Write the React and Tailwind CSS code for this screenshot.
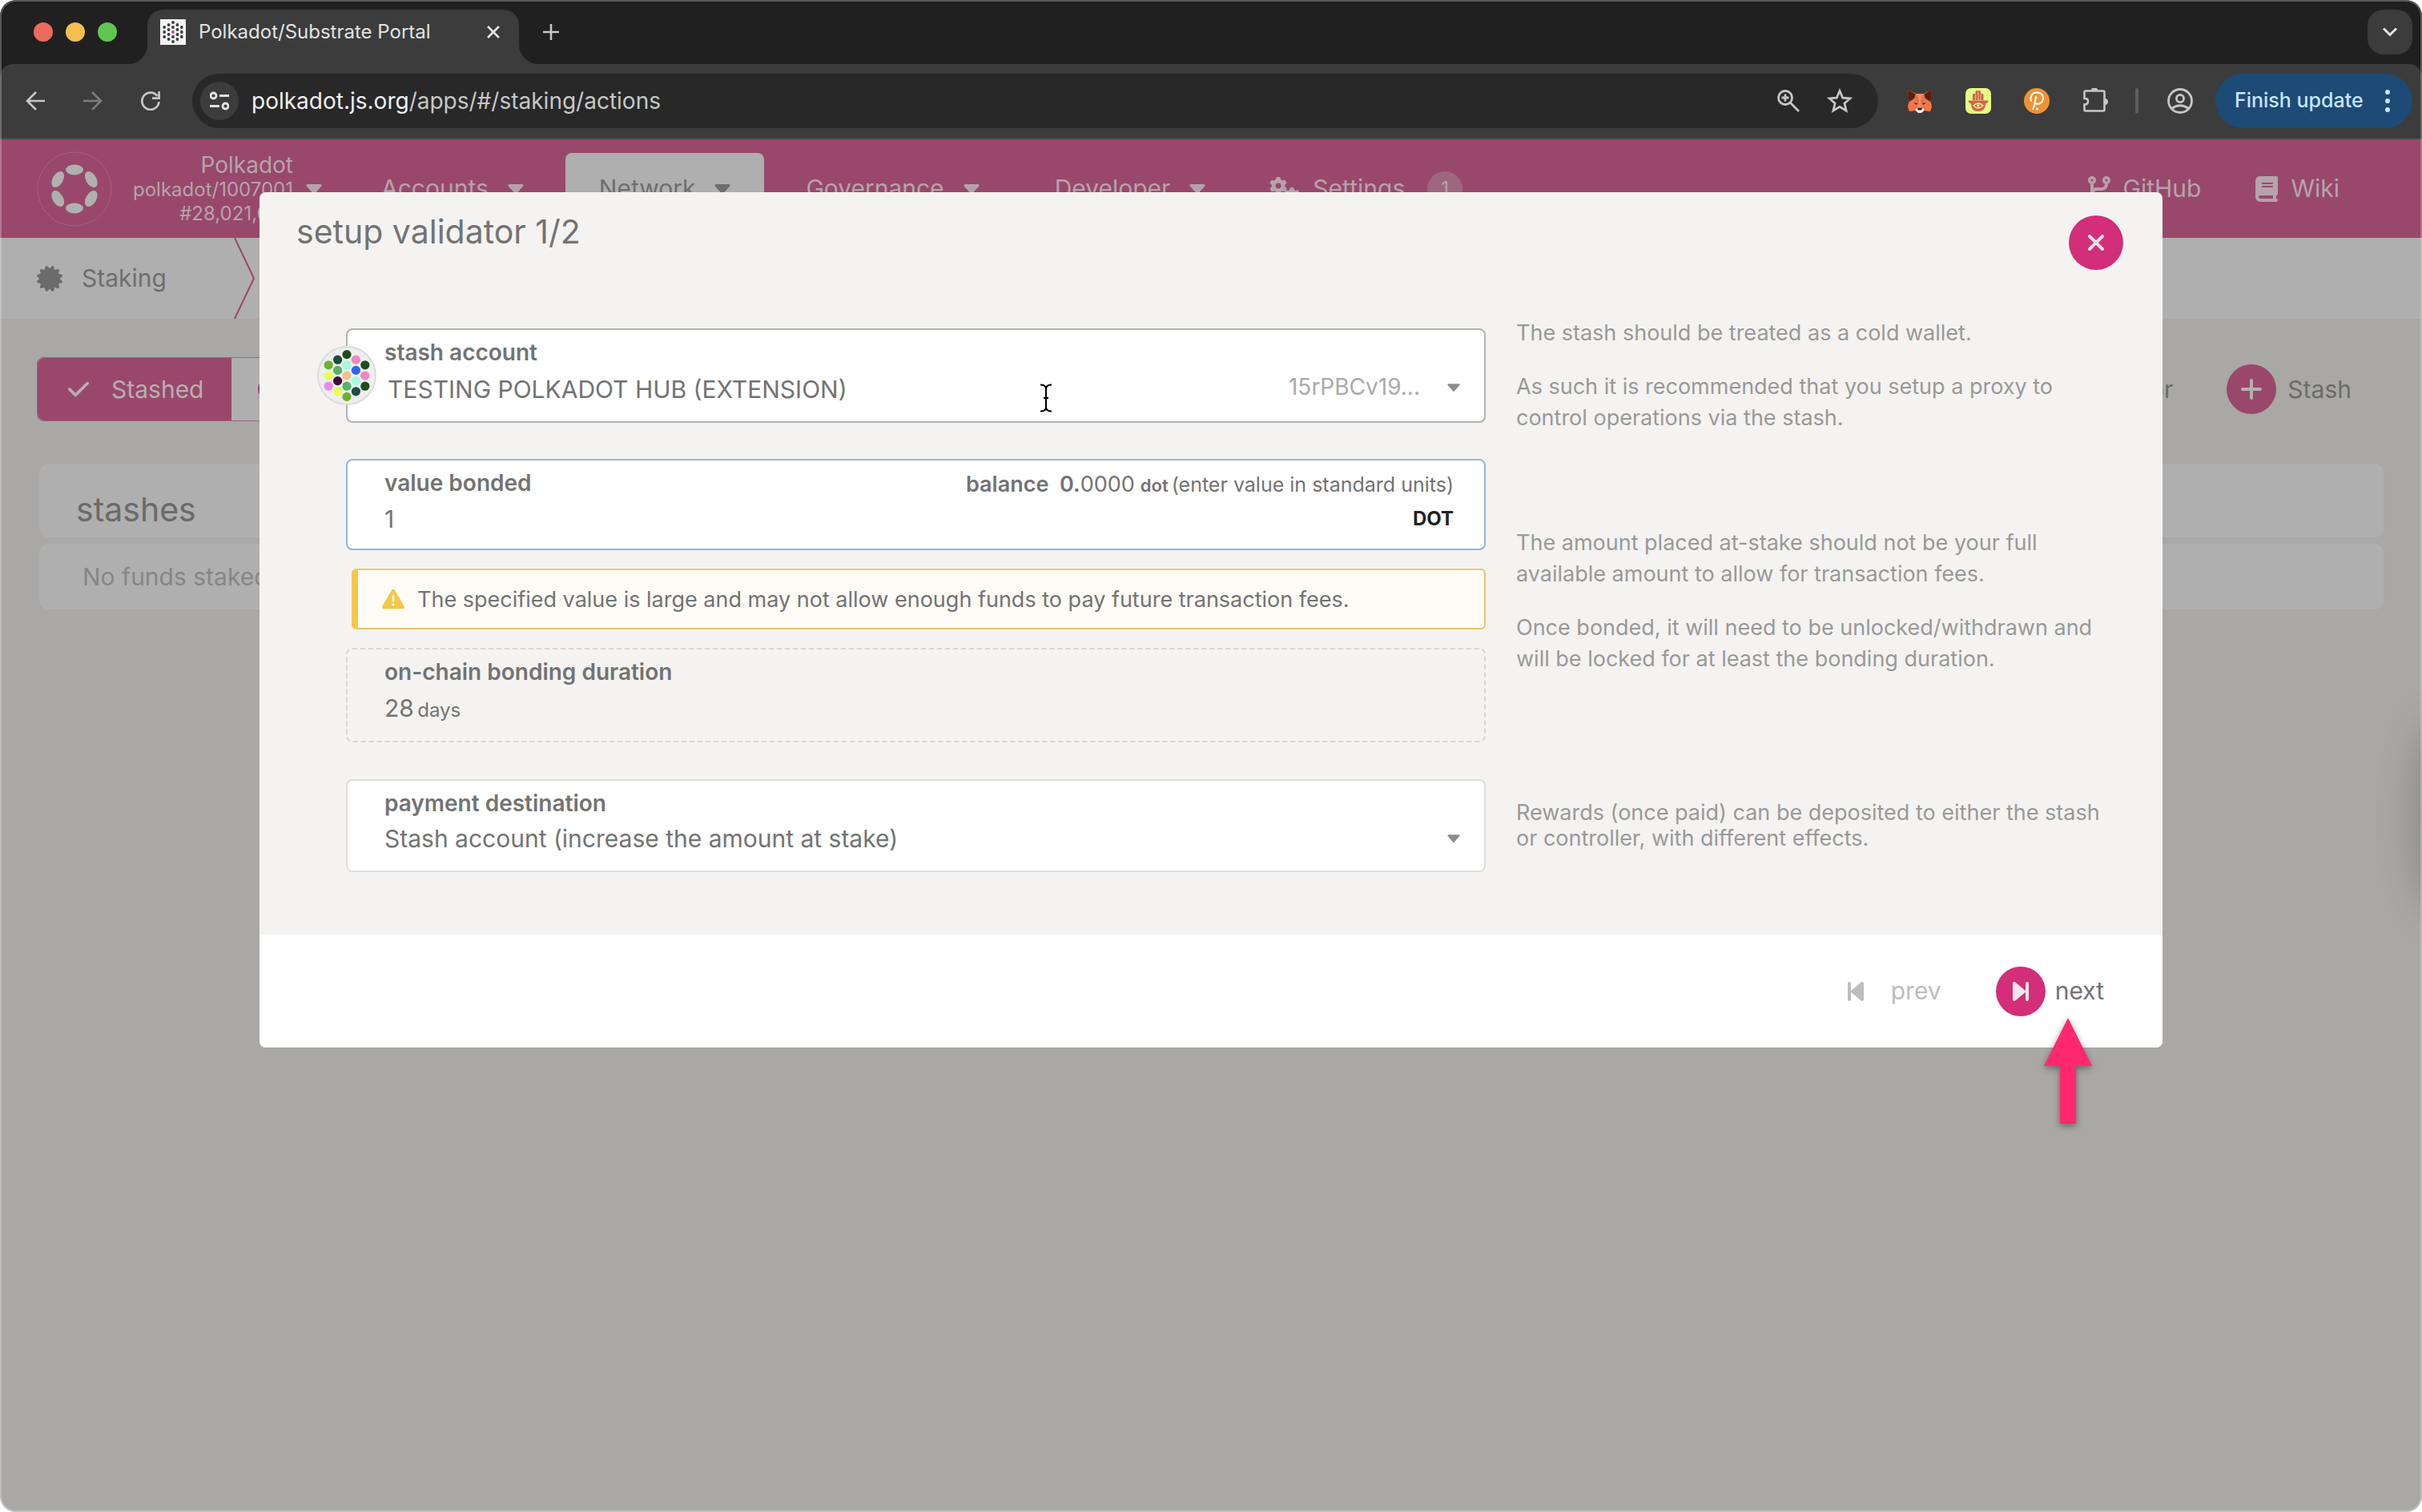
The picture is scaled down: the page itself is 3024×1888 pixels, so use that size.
import { useState } from "react";
import {
  FaBackwardStep,
  FaBook,
  FaCertificate,
  FaCheck,
  FaCodeBranch,
  FaForwardStep,
  FaGear,
  FaPlus,
  FaRegCircle,
  FaTriangleExclamation,
  FaXmark,
} from "react-icons/fa6";

// columns of the 19-dot polkadot figure: [x, y, color]
const IDENTICON = [
  [0, -4, "#1e4d1e"],
  [0, -2, "#a2fbdc"],
  [0, 0, "#f5c08d"],
  [0, 2, "#55b36a"],
  [0, 4, "#70b030"],
  [-1, -3, "#1f4d3f"],
  [-1, -1, "#55b36a"],
  [-1, 1, "#400b3a"],
  [-1, 3, "#e8ff55"],
  [-2, -2, "#70b030"],
  [-2, 0, "#e8ff55"],
  [-2, 2, "#ec88ee"],
  [1, -3, "#ec88c4"],
  [1, -1, "#3163f5"],
  [1, 1, "#a2fbdc"],
  [1, 3, "#1f4d3f"],
  [2, -2, "#1e4d1e"],
  [2, 0, "#ec88c4"],
  [2, 2, "#1e4d1e"],
];

const NAV = [
  { label: "Accounts" },
  { label: "Network", active: true },
  { label: "Governance" },
  { label: "Developer" },
];

const Caret = ({ className }) => (
  <svg viewBox="0 0 20 12" className={className} fill="currentColor">
    <path d="M2 0h16a1.5 1.5 0 0 1 1.2 2.4l-7.6 8.6a2 2 0 0 1-3.2 0L.8 2.4A1.5 1.5 0 0 1 2 0z" />
  </svg>
);

const Favicon = () => (
  <svg viewBox="-16 -16 32 32" className="size-8 bg-[#f4f4f4]">
    {IDENTICON.map(([x, y], i) => (
      <circle
        key={i}
        cx={x * 5.4}
        cy={y * 3}
        r="1.9"
        fill={x === 0 && y === 0 ? "#c0409a" : "#3c3c3c"}
      />
    ))}
  </svg>
);

const Identicon = () => (
  <svg viewBox="-37 -37 74 74" className="size-[74px]">
    <circle r="36" fill="#eeeeee" stroke="#dcdcdc" strokeWidth="2" />
    {IDENTICON.map(([x, y, color], i) => (
      <circle key={i} cx={x * 11.4} cy={y * 6.6} r="5.6" fill={color} />
    ))}
  </svg>
);

const PolkadotLogo = () => (
  <svg viewBox="-47 -47 94 94" className="size-[94px]">
    <circle r="46" fill="none" stroke="#a75f7e" />
    {[0, 60, 120, 180, 240, 300].map((deg) => (
      <ellipse
        key={deg}
        cy="-24"
        rx="11"
        ry="6.5"
        fill="#b0b0b0"
        transform={`rotate(${deg})`}
      />
    ))}
  </svg>
);

const Fox = () => (
  <svg viewBox="0 0 32 32" className="size-8">
    <path d="M2 2l9 5h10l9-5 1 6-2 7 2 8-2 6-7-1-4 3h-4l-4-3-7 1-2-6 2-8-2-7z" fill="#ec7a50" />
    <path d="M2 2l9 6-2 5-6 4-2-9z" fill="#5c1f0d" />
    <path d="M30 2l-9 6 2 5 6 4 2-9z" fill="#5c1f0d" />
    <path d="M11 7h10l1 7-3 9h-6l-3-9z" fill="#f08a5f" />
    <path d="M11 7l4 8-1 8-4-9zM21 7l-4 8 1 8 4-9z" fill="#e07048" />
    <path d="M1 23l9-1 3 4-3 2-7 1zM31 23l-9-1-3 4 3 2 7 1z" fill="#fb743d" />
    <path d="M8 18l5 1-1 2zM24 18l-5 1 1 2z" fill="#4a2018" />
    <path d="M10 27l3-2h6l3 2-4 4h-4z" fill="#f6f6f6" />
    <path d="M13 25h6l-1 2.500h-4z" fill="#241a1a" />
  </svg>
);

const Hand = () => (
  <svg viewBox="0 0 32 32" className="size-8">
    <rect width="32" height="32" rx="7" fill="#e4fd85" />
    <path
      d="M9 15V8.500a1.500 1.500 0 0 1 3.500 0V5a1.600 1.600 0 0 1 3.200-.500 1.600 1.600 0 0 1 3.300.5v3.500a1.500 1.500 0 0 1 3.500 0V15z"
      fill="#d4604f"
    />
    <path d="M12.700 8v7M18.900 8v7M15.800 5v10" stroke="#e4fd85" strokeWidth=".7" />
    <path d="M3.500 15.500h25q0 3-3.500 4 0 9.500-9 9.500t-9-9.500q-3.500-1-3.500-4z" fill="#d4604f" />
    <path d="M10 22q6-6 12 0-6 6-12 0z" fill="#d4604f" stroke="#e4fd85" strokeWidth="1.500" />
    <circle cx="16" cy="22" r="1.800" fill="#e4fd85" />
  </svg>
);

const Polkagate = () => (
  <svg viewBox="0 0 32 32" className="size-8">
    <circle cx="16" cy="16" r="16" fill="#ef9234" />
    <g fill="none" stroke="#fff" strokeWidth="2" strokeLinecap="round">
      <path d="M9 16c-2-6 2-10.500 7-10.500 5.500 0 8.500 3.500 8 8-.500 4-4 7-9 6" />
      <path d="M15 11l-2 10-1.500 5" />
    </g>
    <circle cx="16.500" cy="26" r="1.600" fill="#fff" />
  </svg>
);

const BrowserChrome = () => (
  <header className="bg-[#202020]">
    <div className="flex h-20 items-end">
      <div className="flex h-full w-[160px] items-center gap-4 pl-[42px]">
        <span className="size-6 rounded-full bg-[#ed6a5e]" />
        <span className="size-6 rounded-full bg-[#f5bf4f]" />
        <span className="size-6 rounded-full bg-[#61c554]" />
      </div>
      <div className="size-6 bg-[#3c3c3c]">
        <div className="size-6 rounded-br-3xl bg-[#202020]" />
      </div>
      <div className="flex h-[68px] w-[464px] items-center rounded-t-[20px] bg-[#3c3c3c] pb-3 pr-5 pl-4">
        <Favicon />
        <span className="ml-4 flex-1 text-2xl text-[#e3e3e3]">
          Polkadot/Substrate Portal
        </span>
        <button aria-label="Close tab" className="text-[#e3e3e3]">
          <svg viewBox="0 0 24 24" className="size-6" stroke="currentColor" strokeWidth="2.600">
            <path d="M5 5l14 14M19 5L5 19" />
          </svg>
        </button>
      </div>
      <div className="size-6 bg-[#3c3c3c]">
        <div className="size-6 rounded-bl-3xl bg-[#202020]" />
      </div>
      <button aria-label="New tab" className="flex h-full items-center pl-1 text-[#c7c7c7]">
        <svg viewBox="0 0 24 24" className="size-6" stroke="currentColor" strokeWidth="2.600">
          <path d="M12 2v20M2 12h20" />
        </svg>
      </button>
      <button
        aria-label="Search tabs"
        className="mr-3 mb-3 ml-auto grid size-14 place-items-center rounded-[20px] bg-[#3c3c3c] text-[#e3e3e3]"
      >
        <svg viewBox="0 0 20 12" className="h-3 w-5" fill="none" stroke="currentColor" strokeWidth="3">
          <path d="M2 1.500l8 8 8-8" />
        </svg>
      </button>
    </div>

    <div className="flex h-[94px] items-center rounded-t-2xl border-b-2 border-[#464a48] bg-[#3c3c3c] pr-3 pl-8 text-[#c7c7c7]">
      <button aria-label="Back">
        <svg viewBox="0 0 24 24" className="size-6" fill="none" stroke="currentColor" strokeWidth="2.600">
          <path d="M24 12H2M13 1L2 12l11 11" />
        </svg>
      </button>
      <button aria-label="Forward" className="ml-12 text-[#7c7c7c]">
        <svg viewBox="0 0 24 24" className="size-6" fill="none" stroke="currentColor" strokeWidth="2.600">
          <path d="M0 12h22M11 1l11 11-11 11" />
        </svg>
      </button>
      <button aria-label="Reload" className="ml-12">
        <svg viewBox="0 0 24 24" className="size-6" fill="none" stroke="currentColor" strokeWidth="2.700">
          <path d="M22.500 13A10.600 10.600 0 1 1 20.500 6" />
          <path d="M22.600 0v8.700H14" />
        </svg>
      </button>
      <div className="ml-10 flex h-[68px] flex-1 items-center rounded-full bg-[#282828] pr-8 pl-2.5">
        <span className="grid size-12 place-items-center rounded-full bg-[#3c3c3c] text-[#e3e3e3]">
          <svg viewBox="0 0 24 24" className="size-6" fill="none" stroke="currentColor" strokeWidth="2.800">
            <circle cx="4.500" cy="5.500" r="3.500" />
            <circle cx="19.500" cy="18.500" r="3.500" />
            <path d="M12 5.500h12M0 18.500h12" />
          </svg>
        </span>
        <span className="ml-4 flex-1 text-[28px] text-[#c7c7c7]">
          <span className="text-[#f0f0f0]">polkadot.js.org</span>/apps/#/staking/actions
        </span>
        <svg viewBox="0 0 28 28" className="size-7" fill="none" stroke="currentColor" strokeWidth="2.800">
          <circle cx="10" cy="10" r="8.500" />
          <path d="M16.500 16.500L27 27M10 5.500v9M5.500 10h9" />
        </svg>
        <svg viewBox="0 0 32 32" className="ml-[34px] size-8" fill="none" stroke="currentColor" strokeWidth="2.700">
          <path d="M16 3.500l3.700 8.600 9.300.8-7.100 6.100 2.200 9.200-8.100-4.900-8.100 4.900 2.200-9.200L3 12.900l9.300-.8z" />
        </svg>
      </div>
      <div className="ml-9 flex items-center gap-[41px]">
        <Fox />
        <Hand />
        <Polkagate />
        <svg viewBox="0 0 32 32" className="size-8" fill="none" stroke="currentColor" strokeWidth="2.600">
          <path d="M2.500 13V5q0-1.500 1.500-1.500h22q1.500 0 1.500 1.500v22q0 1.500-1.500 1.500H4q-1.500 0-1.500-1.500v-6.500q4.500 0 4.500-4T2.500 13z" />
          <path d="M11 3a4 4 0 0 1 8 0zM28 13a4 4 0 0 1 0 8z" fill="currentColor" stroke="none" />
        </svg>
      </div>
      <span className="ml-[34px] h-8 w-1 rounded-full bg-[#5e5e5e]" />
      <svg viewBox="0 0 32 32" className="ml-9 size-8" fill="none" stroke="currentColor" strokeWidth="2.800">
        <circle cx="16" cy="16" r="14.500" />
        <circle cx="16" cy="13" r="4.600" />
        <path d="M5.500 25.500q10.500-7.500 21 0" />
      </svg>
      <button className="ml-7 flex h-[68px] w-[246px] items-center justify-between rounded-full bg-[#1e4a76] pr-7 pl-6 text-[25px] font-medium text-[#c7e4ff]">
        Finish update
        <span className="flex flex-col gap-[5px]">
          <span className="size-1.5 rounded-full bg-[#c7e4ff]" />
          <span className="size-1.5 rounded-full bg-[#c7e4ff]" />
          <span className="size-1.5 rounded-full bg-[#c7e4ff]" />
        </span>
      </button>
    </div>
  </header>
);

const Menu = () => (
  <div className="flex h-[123px] items-center bg-[#99486b] pr-[103px] pl-[46px] text-[30px] text-[#b5a3ac]">
    <PolkadotLogo />
    <button className="ml-3 flex w-[250px] items-center justify-end gap-4 text-right">
      <span className="text-[28px] leading-8">
        Polkadot
        <span className="block text-2xl leading-[30px]">polkadot/1007001</span>
        <span className="block text-2xl leading-[30px]">#28,021,064</span>
      </span>
      <Caret className="h-3 w-5" />
    </button>
    <nav className="ml-8 flex h-full items-center gap-2.5">
      {NAV.map((item) => (
        <button
          key={item.label}
          className={
            item.active
              ? "mt-[17px] flex h-[106px] items-center gap-6 rounded-t-lg bg-[#afafaf] px-[42px] pb-[17px] text-[#6e6e6e]"
              : "flex items-center gap-6 px-[42px]"
          }
        >
          {item.label}
          <Caret className="h-3 w-5" />
        </button>
      ))}
      <button className="flex items-center pl-7">
        <span className="flex items-center">
          <FaGear className="mb-2 size-[22px]" />
          <FaGear className="-ml-1 mt-4 size-5" />
        </span>
        <span className="ml-4">Settings</span>
        <span className="ml-7 grid size-11 place-items-center rounded-full bg-[#9e6780] text-2xl">
          1
        </span>
      </button>
    </nav>
    <a href="#github" className="ml-auto flex items-center gap-4">
      <FaCodeBranch className="h-8 w-7" />
      GitHub
    </a>
    <a href="#wiki" className="ml-[68px] flex items-center gap-4">
      <FaBook className="h-8 w-7" />
      Wiki
    </a>
  </div>
);

const StakingPage = () => (
  <>
    <Menu />
    <div className="flex h-[101px] items-center bg-[#afafaf] pl-[46px] text-[30px] text-[#6e6e6e]">
      <FaCertificate className="size-8 text-[#6b6b6b]" />
      <span className="ml-6 w-[190px]">Staking</span>
      <svg viewBox="0 0 26 101" className="h-full w-[26px]" fill="none" stroke="#99486b" strokeWidth="2">
        <path d="M1 0l24 50.500L1 101" />
      </svg>
    </div>
    <main className="flex-1 pt-12 pr-12 pl-[46px]">
      <div className="flex items-center text-[30px]">
        <div className="flex h-20 rounded-lg border border-[#a3607f] bg-[#afafaf]">
          <button className="flex w-[242px] items-center rounded-l-lg bg-[#99486b] pl-9 text-[#b9adb2]">
            <FaCheck className="size-[30px]" />
            <span className="ml-[26px]">Stashed</span>
          </button>
          <button className="flex w-[242px] items-center pl-[33px] text-[#99486b]">
            <FaRegCircle className="size-7" />
          </button>
        </div>
        <div className="ml-auto flex items-center pr-10 text-[#6b6b6b]">
          <button className="flex items-center gap-3.5">
            <span className="grid size-[62px] place-items-center rounded-full bg-[#99486b] text-[#b9adb2]">
              <FaPlus className="size-8" />
            </span>
            Validator
          </button>
          <button className="ml-[67px] flex items-center gap-3.5">
            <span className="grid size-[62px] place-items-center rounded-full bg-[#99486b] text-[#b9adb2]">
              <FaPlus className="size-8" />
            </span>
            Stash
          </button>
        </div>
      </div>
      <section className="mt-[53px] space-y-2 pl-[3px]">
        <h1 className="flex h-[92px] items-center rounded-xl bg-[#afafaf] pt-6 pl-[46px] text-[41px] text-[#6a6a6a]">
          stashes
        </h1>
        <p className="flex h-[82px] items-center rounded-xl bg-[#afafaf] pl-[54px] text-[30px] text-[#868686]">
          No funds staked yet
        </p>
      </section>
    </main>
  </>
);

const LABEL = "block text-[28px] leading-8 font-semibold text-[#737373]";
const FIELD = "relative rounded-lg border-2 bg-white px-[46px] pt-3";

const SetupValidator = () => {
  const [value, setValue] = useState("1");

  return (
    <div
      role="dialog"
      aria-labelledby="setup-title"
      className="absolute inset-x-81 top-[240px] rounded-lg bg-[#f4f3f1] text-[#737373]"
    >
      <div className="flex h-[156px] items-start justify-between pr-[49px] pl-[46px]">
        <h2 id="setup-title" className="pt-6 text-[41px] leading-[50px]">
          setup validator 1/2
        </h2>
        <button
          aria-label="Close"
          className="mt-[29px] grid size-[68px] place-items-center rounded-full bg-[#d32e79] text-[#fbe3ee]"
        >
          <FaXmark className="size-8" />
        </button>
      </div>

      <div className="grid grid-cols-[1fr_744px] items-center gap-x-[38px] gap-y-8 pr-[63px] pb-[78px] pl-27 text-[27px] leading-[39px] text-[#999]">
        <div className={`${FIELD} h-[118px] border-[#b3b3b3]`}>
          <div className="absolute top-[20px] -left-[38px]">
            <Identicon />
          </div>
          <label htmlFor="stash" className={LABEL}>
            stash account
          </label>
          <div className="-mr-4 flex items-center">
            <select
              id="stash"
              className="h-14 flex-1 appearance-none pt-1.5 pl-1 text-[30px] text-[#737373]"
            >
              <option>TESTING POLKADOT HUB (EXTENSION)</option>
            </select>
            <span className="text-[28px] text-[#aaa]">15rPBCv19...</span>
            <Caret className="ml-[34px] h-2.5 w-4 text-[#8c8c8c]" />
          </div>
          <svg
            viewBox="0 0 16 36"
            className="absolute top-[67px] left-[864px] h-9 w-4"
            fill="none"
            stroke="#000"
            strokeWidth="2.200"
          >
            <path d="M1 1.500q6 0 7 4 1-4 7-4M8 5v26M1 34.500q6 0 7-4 1 4 7 4M5 18h6" />
          </svg>
        </div>
        <div className="space-y-7">
          <p>The stash should be treated as a cold wallet.</p>
          <p>
            As such it is recommended that you setup a proxy to control
            operations via the stash.
          </p>
        </div>

        <div className="text-[#737373]">
          <div className={`${FIELD} h-[114px] border-[#94b6d8]`}>
            <div className="-mr-2 flex justify-between">
              <label htmlFor="bonded" className={LABEL}>
                value bonded
              </label>
              <span className="text-[25px] leading-9">
                <b className="text-[27px] font-semibold">balance&nbsp; 0.</b>
                <span className="text-[27px]">0000</span>{" "}
                <b className="text-[22px] font-semibold">dot</b>
                <span className="ml-1">(enter value in standard units)</span>
              </span>
            </div>
            <div className="-mr-2 flex items-center">
              <input
                id="bonded"
                value={value}
                onChange={(e) => setValue(e.target.value)}
                className="h-12 flex-1 text-[30px] outline-none"
              />
              <span className="text-2xl font-bold text-[#222]">DOT</span>
            </div>
          </div>
          <div className="mt-[23px] ml-[7px] flex h-[76px] items-center gap-4 rounded-md border-2 border-l-8 border-[#e8c668] border-l-[#f5c748] bg-[#fffcf7] pl-[30px]">
            <FaTriangleExclamation className="size-7 text-[#f5c748]" />
            The specified value is large and may not allow enough funds to pay
            future transaction fees.
          </div>
          <div className="mt-[23px] h-[118px] rounded-lg border-2 border-dashed border-[#d6d5d3] px-[46px] pt-3">
            <span className={LABEL}>on-chain bonding duration</span>
            <p className="pt-1 text-[30px] leading-[50px]">
              28 <span className="-ml-1 text-2xl">days</span>
            </p>
          </div>
        </div>
        <div className="space-y-7">
          <p>
            The amount placed at-stake should not be your full available amount
            to allow for transaction fees.
          </p>
          <p>
            Once bonded, it will need to be unlocked/withdrawn and will be
            locked for at least the bonding duration.
          </p>
        </div>

        <div className={`${FIELD} mt-3.5 h-[116px] border-[#dedede]`}>
          <label htmlFor="payment" className={LABEL}>
            payment destination
          </label>
          <div className="-mr-4 flex items-center">
            <select
              id="payment"
              className="h-14 flex-1 appearance-none text-[30px] text-[#737373]"
            >
              <option>Stash account (increase the amount at stake)</option>
            </select>
            <Caret className="h-2.5 w-4 text-[#8c8c8c]" />
          </div>
        </div>
        <p className="mt-3.5 leading-8">
          Rewards (once paid) can be deposited to either the stash or
          controller, with different effects.
        </p>
      </div>

      <div className="flex h-[141px] items-center justify-end rounded-b-lg bg-white pr-[73px] text-[30px]">
        <button disabled className="flex items-center gap-7 text-[#bdbdbd]">
          <FaBackwardStep className="size-8" />
          prev
        </button>
        <button className="relative ml-17 flex items-center gap-3">
          <span className="grid size-[62px] place-items-center rounded-full bg-[#d32e79] text-[#fbe3ee]">
            <FaForwardStep className="size-8" />
          </span>
          next
          <svg
            viewBox="0 0 80 150"
            className="absolute top-[56px] right-[5px] h-[150px] w-20 drop-shadow-[0_3px_4px_rgba(0,0,0,0.4)]"
          >
            <path d="M40 8l30 60H50v72H30V68H10z" fill="#ff2870" />
          </svg>
        </button>
      </div>
    </div>
  );
};

export default function App() {
  return (
    <div className="bg-white font-[Inter,sans-serif]">
      <div className="relative flex min-h-screen flex-col overflow-hidden rounded-[20px] bg-[#a9a8a6]">
        <BrowserChrome />
        <StakingPage />
        <SetupValidator />
        <div className="pointer-events-none absolute top-[900px] -right-14 h-[240px] w-16 rounded-[50%] bg-black/20 blur-xl" />
        <div className="pointer-events-none absolute inset-0 rounded-[20px] border-2 border-white/25" />
      </div>
    </div>
  );
}
